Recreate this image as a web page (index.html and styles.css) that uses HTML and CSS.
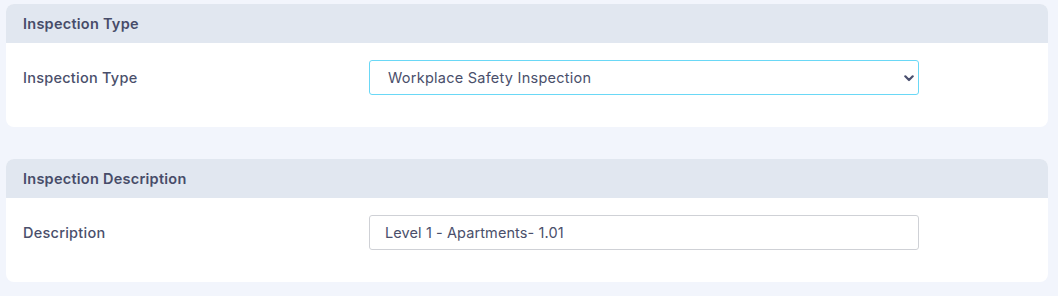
FILE: index.html
```html
<!DOCTYPE html>
<html>
<head>
<meta charset="utf-8">
<link rel="stylesheet" href="styles.css">
</head>
<body>
<div class="page">
  <section class="card">
    <div class="card-header">Inspection Type</div>
    <div class="card-body">
      <div class="row">
        <label class="label">Inspection Type</label>
        <div class="select-wrap">
          <select class="control select focused">
            <option>Workplace Safety Inspection</option>
          </select>
          <svg class="chev" width="10" height="7" viewBox="0 0 10 7"><path d="M1.3 1.3 L5 5 L8.7 1.3" fill="none" stroke="#4a4f6e" stroke-width="2.2" stroke-linecap="round" stroke-linejoin="round"/></svg>
        </div>
      </div>
    </div>
  </section>
  <section class="card">
    <div class="card-header">Inspection Description</div>
    <div class="card-body">
      <div class="row">
        <label class="label">Description</label>
        <input class="control input" type="text" value="Level 1 - Apartments- 1.01">
      </div>
    </div>
  </section>
</div>
</body>
</html>
```
FILE: styles.css
```css
html, body {
  margin: 0;
  padding: 0;
  background: #f2f5fc;
}
body {
  font-family: "Inter", "Open Sans", sans-serif;
  color: #4a4f6b;
}
.page {
  display: flex;
  flex-direction: column;
  gap: 32px;
  padding: 4px 10px 0 6px;
}
.card {
  background: #ffffff;
  border-radius: 8px;
  overflow: hidden;
}
.card-header {
  background: #e1e7f0;
  height: 39px;
  display: flex;
  align-items: center;
  padding: 0 17px;
  font-size: 14.5px;
  letter-spacing: 0.25px;
  font-weight: 600;
  color: #474c69;
}
.card-body {
  padding: 17px 17px 32px 17px;
}
.row {
  display: grid;
  grid-template-columns: 346px 550px;
  align-items: center;
}
.label {
  font-size: 14.5px;
  letter-spacing: 0.25px;
  font-weight: 500;
  color: #4a4f6b;
}
.control {
  box-sizing: border-box;
  width: 550px;
  height: 35px;
  margin: 0;
  font-family: inherit;
  font-size: 14.5px;
  letter-spacing: 0.25px;
  color: #4a4f6b;
  background: #fff;
  border: 1px solid #cfd1d6;
  border-radius: 3px;
  outline: none;
}
.select-wrap {
  position: relative;
  width: 550px;
  height: 35px;
}
.select {
  appearance: none;
  -webkit-appearance: none;
  padding: 0 30px 0 18px;
}
.focused {
  border-color: #6ad8f6;
}
.chev {
  position: absolute;
  right: 5px;
  top: 15px;
  pointer-events: none;
}
.input {
  padding: 0 15px;
  letter-spacing: 0.1px;
}
```
